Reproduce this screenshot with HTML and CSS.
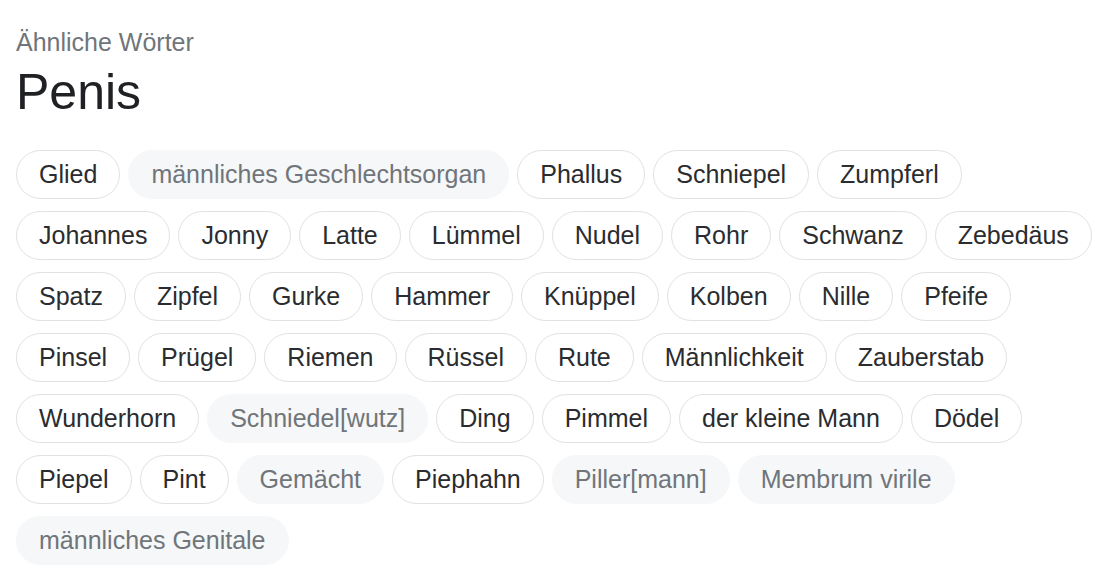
FILE: index.html
```html
<!DOCTYPE html>
<html lang="de">
<head>
<meta charset="utf-8">
<title>Ähnliche Wörter – Penis</title>
<link rel="stylesheet" href="styles.css">
</head>
<body>
<main class="panel">
  <div class="label">Ähnliche Wörter</div>
  <h1 class="title">Penis</h1>
  <div class="chips">
    <span class="chip">Glied</span>
    <span class="chip muted">männliches Geschlechtsorgan</span>
    <span class="chip">Phallus</span>
    <span class="chip">Schniepel</span>
    <span class="chip">Zumpferl</span>
    <span class="chip">Johannes</span>
    <span class="chip">Jonny</span>
    <span class="chip">Latte</span>
    <span class="chip">Lümmel</span>
    <span class="chip">Nudel</span>
    <span class="chip">Rohr</span>
    <span class="chip">Schwanz</span>
    <span class="chip">Zebedäus</span>
    <span class="chip">Spatz</span>
    <span class="chip">Zipfel</span>
    <span class="chip">Gurke</span>
    <span class="chip">Hammer</span>
    <span class="chip">Knüppel</span>
    <span class="chip">Kolben</span>
    <span class="chip">Nille</span>
    <span class="chip">Pfeife</span>
    <span class="chip">Pinsel</span>
    <span class="chip">Prügel</span>
    <span class="chip">Riemen</span>
    <span class="chip">Rüssel</span>
    <span class="chip">Rute</span>
    <span class="chip">Männlichkeit</span>
    <span class="chip">Zauberstab</span>
    <span class="chip">Wunderhorn</span>
    <span class="chip muted">Schniedel[wutz]</span>
    <span class="chip">Ding</span>
    <span class="chip">Pimmel</span>
    <span class="chip">der kleine Mann</span>
    <span class="chip">Dödel</span>
    <span class="chip">Piepel</span>
    <span class="chip">Pint</span>
    <span class="chip muted">Gemächt</span>
    <span class="chip">Piephahn</span>
    <span class="chip muted">Piller[mann]</span>
    <span class="chip muted">Membrum virile</span>
    <span class="chip muted">männliches Genitale</span>
  </div>
</main>
</body>
</html>
```
FILE: styles.css
```css
html, body {
  margin: 0;
  padding: 0;
  background: #ffffff;
  overflow: hidden;
}

body {
  font-family: "Liberation Sans", Arial, sans-serif;
  color: #202124;
}

.panel {
  padding: 26px 0 0 16px;
  width: 1090px;
}

.label {
  font-size: 25px;
  line-height: 32px;
  color: #70757a;
}

.title {
  margin: 4px 0 0 0;
  font-size: 50px;
  font-weight: normal;
  line-height: 60px;
  color: #202124;
}

.chips {
  margin-top: 28px;
  display: flex;
  flex-wrap: wrap;
  column-gap: 8px;
  row-gap: 12px;
}

.chip {
  display: inline-flex;
  align-items: center;
  box-sizing: border-box;
  height: 49px;
  padding: 0 22px;
  border: 1.5px solid #dfe1e5;
  border-radius: 25px;
  font-size: 25px;
  color: #2a2c2f;
  white-space: nowrap;
  background: #ffffff;
}

.chip.muted {
  background: #f6f7f8;
  border-color: #f6f7f8;
  color: #70757a;
}
```
